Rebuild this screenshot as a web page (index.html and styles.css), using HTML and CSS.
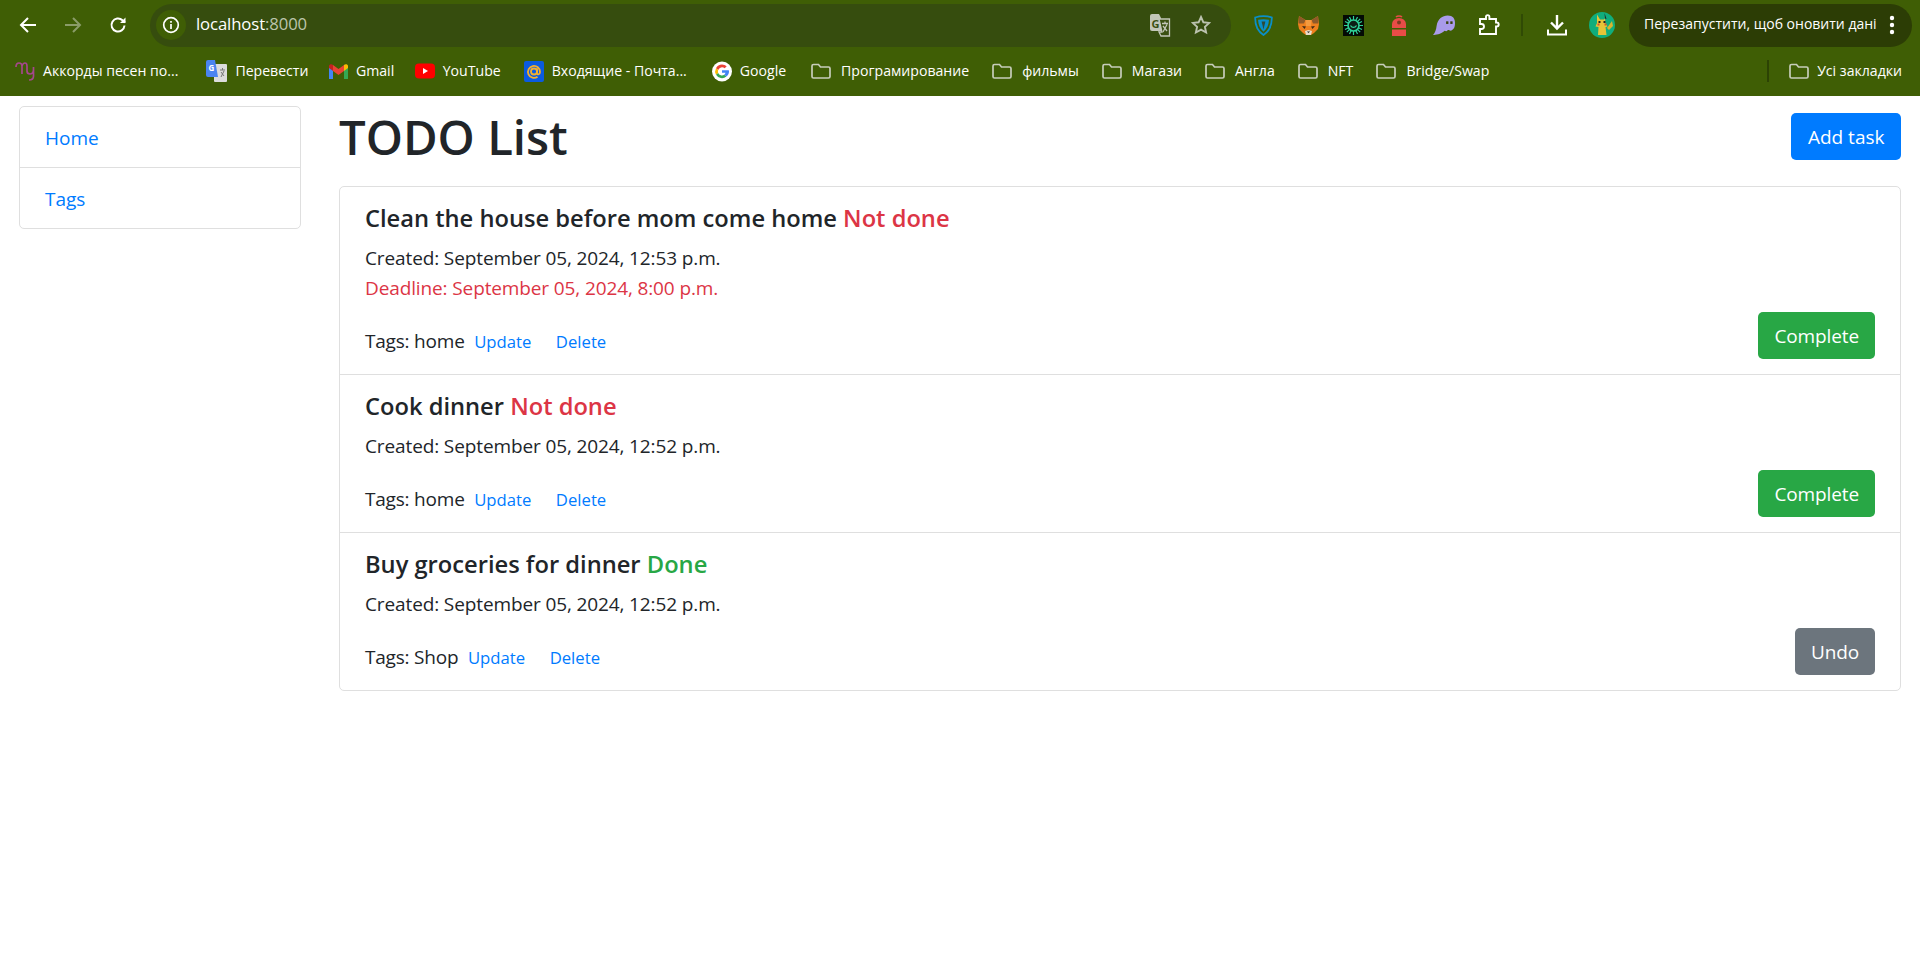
FILE: index.html
```html
<!DOCTYPE html>
<html lang="en">
<head>
<meta charset="utf-8">
<title>TODO List</title>
<link rel="stylesheet" href="styles.css">
</head>
<body>
<header class="chrome">
  <div class="toolbar">
    <span class="slot"><svg width="20" height="20" viewBox="0 0 20 20" fill="none" stroke="#fff" stroke-width="2"><path d="M18 10H3M10 3l-7 7 7 7"/></svg></span>
    <span class="slot"><svg width="20" height="20" viewBox="0 0 20 20" fill="none" stroke="#8a9c68" stroke-width="2"><path d="M2 10h15M10 3l7 7-7 7"/></svg></span>
    <span class="slot"><svg width="20" height="20" viewBox="0 0 20 20" fill="none" stroke="#fff" stroke-width="2"><path d="M16.5 10.5a6.5 6.5 0 1 1-2-5.2L17 7.5"/><path d="M17.5 2.5v5.500h-5.500" fill="#fff" stroke="none"/></svg></span>
    <div class="omnibox">
      <span class="site-info"><svg width="18" height="18" viewBox="0 0 18 18" fill="none" stroke="#fff" stroke-width="1.700"><circle cx="9" cy="9" r="7.300"/><path d="M9 8v5M9 5v1.800"/></svg></span>
      <span class="url">localhost<span class="url-port">:8000</span></span>
      <span class="omni-icons">
        <svg width="22" height="24" viewBox="0 0 22 24"><path d="M1 3a2 2 0 0 1 2-2h7l2 4v13H3a2 2 0 0 1-2-2z" fill="#c2c6b8"/><path d="M10 6h10.500v17H12l-2-4h3z" fill="#3a5011" stroke="#c2c6b8" stroke-width="1.300"/><text x="2.500" y="14.500" class="gt-letter">G</text><path d="M13 10.500h6M16 8.500v2M14 19l4-7.500M14 13l4 5" stroke="#c2c6b8" stroke-width="1.300" fill="none"/></svg>
        <svg width="20" height="20" viewBox="0 0 20 20" fill="none" stroke="#bcc2af" stroke-width="1.900"><path d="M10 2l2.400 5.300 5.800.6-4.300 3.900 1.200 5.700L10 14.600l-5.100 2.900 1.200-5.700L1.800 7.900l5.800-.6z"/></svg>
      </span>
    </div>
    <span class="slot slot-first"><svg width="19" height="21" viewBox="0 0 19 21"><path d="M1.200 2.500C6.500.8 12.500.8 17.800 2.500 18 10.500 15 16.500 9.500 20 4 16.500 1 10.500 1.200 2.500z" fill="none" stroke="#0a8fc9" stroke-width="1.800"/><path d="M4 4.800c3.500-.9 7.500-.9 11 0-.2 5-2 9-5.500 12C6 13.800 4.200 9.800 4 4.800z" fill="#0a8fc9"/><path d="M7.600 6.500h3.800L9.500 14.500z" fill="#2c4a3a"/></svg></span>
    <span class="slot"><svg width="21" height="21" viewBox="0 0 21 21"><path d="M0 9l1-8 6.500 4h6L20 1l1 8-1 5-4 4-3 2H8l-3-2-4-4z" fill="#ee801f"/><path d="M1 1l6.500 4L6 8.500H.6zM20 1l-6.500 4L15 8.500h5.400z" fill="#8f5a2a"/><path d="M7.500 5h6L13 11H8z" fill="#f49a3f"/><path d="M4 11l4 .5-1.500 2.500zM17 11l-4 .5 1.500 2.500z" fill="#3f2a18"/><path d="M7 16l3.500-1 3.500 1-1 4H8z" fill="#e7dccb"/><path d="M9 16.500h3L10.500 18z" fill="#222"/></svg></span>
    <span class="slot"><svg width="21" height="21" viewBox="0 0 21 21"><rect width="21" height="21" fill="#040a05"/><g stroke="#2fd39a" stroke-width="1.200"><path d="M10.500 1v19M1 10.500h19M3.800 3.800l13.400 13.400M17.200 3.800L3.800 17.200M6.500 2l8 17M14.500 2l-8 17M2 6.500l17 8M19 6.500l-17 8"/></g><circle cx="10.500" cy="10.500" r="5.500" fill="#0c1f16" stroke="#2fd39a" stroke-width="1.600"/><path d="M7.500 10.500c1.500 2.500 4.500 2.500 6 0" stroke="#2fd39a" fill="none" stroke-width="1.300"/></svg></span>
    <span class="slot"><svg width="14" height="21" viewBox="0 0 14 21"><path d="M4 2a3.500 2 0 0 1 6 0" fill="none" stroke="#e84c47" stroke-width="1.600"/><path d="M0 9a7 6 0 0 1 14 0v4H0z" fill="#e84c47"/><circle cx="7" cy="7.500" r="2" fill="#7d3a22"/><path d="M0 14.500h14V21H0z" fill="#e84c47"/></svg></span>
    <span class="slot"><svg width="22" height="20" viewBox="0 0 21 19"><path d="M0 19C2 17 3 14 3.500 10 4.500 4 9 .5 14 .5s7 3 7 7-1 6-4 7.500c-1.500 0-2-1-3-.5-1 1.500-2 1-3 .5-1.500 2-7 4-10 4z" fill="#a99bea"/><rect x="12.500" y="6" width="2.200" height="2.500" fill="#39430f"/><rect x="16.500" y="6" width="2.200" height="2.500" fill="#39430f"/></svg></span>
    <span class="slot"><svg width="22" height="22" viewBox="0 0 22 22" fill="none" stroke="#fff" stroke-width="1.900"><path d="M2 5h6V2.800a1.700 1.700 0 0 1 3.400 0V5H18v3.500h.7a2 2 0 0 1 0 4H18V20H2v-5h1.500a2.300 2.300 0 0 0 0-5H2z"/></svg></span>
    <span class="tool-sep"></span>
    <span class="slot"><svg width="22" height="24" viewBox="0 0 22 24" fill="none" stroke="#fff" stroke-width="2.400"><path d="M11 2v13M5 9.500l6 6 6-6"/><path d="M2 16.500v5h18v-5" stroke-width="2"/></svg></span>
    <span class="slot"><svg width="26" height="26" viewBox="0 0 26 26"><circle cx="13" cy="13" r="13" fill="#10ad7c"/><path d="M8 2.500l3 5h4l1-1 .5 5 2 3-2 .5 1 8H9l.5-8-3-.5 1.500-3.500z" fill="#e6c437"/><path d="M18 16l5-7 1 5-4 4z" fill="#d9b32f"/><path d="M15.500 1l2 6-1.500-.5z" fill="#222"/><rect x="9.500" y="9" width="2" height="2" fill="#222"/><rect x="14.500" y="9" width="2" height="2" fill="#222"/><rect x="8.500" y="11.500" width="2" height="2" fill="#d5502c"/><rect x="15.500" y="11.500" width="2" height="2" fill="#d5502c"/></svg></span>
    <div class="restart">
      <span class="restart-label">Перезапустити, щоб оновити дані</span>
      <svg width="6" height="20" viewBox="0 0 6 20" fill="#fff"><circle cx="3" cy="3" r="2.200"/><circle cx="3" cy="10" r="2.200"/><circle cx="3" cy="17" r="2.200"/></svg>
    </div>
  </div>
  <nav class="bookmarks">
    <a class="bm bm-first"><svg width="20" height="20" viewBox="0 0 20 20" fill="none" stroke="#a5478c" stroke-width="1.700"><path d="M1 6Q1 2 4 2 7 2 7 5V13M7 5Q8 2 10 2 12 2 12 5V10Q12 13 15 13 18 13 18.500 9V6M18.500 9V15Q18.500 19 14 19"/></svg><span>Аккорды песен по...</span></a>
    <a class="bm"><svg width="21" height="22" viewBox="0 0 21 22"><rect x="8" y="4" width="13" height="18" rx="1" fill="#dcdcdc"/><path d="M0 2a2 2 0 0 1 2-2h7l3 17H2a2 2 0 0 1-2-2z" fill="#4a84f0"/><text x="2.500" y="11" class="g-letter">G</text><path d="M14 10h5M16.500 8v2M15 17l3-6M15 12l3 4" stroke="#777" fill="none"/></svg><span>Перевести</span></a>
    <a class="bm bm-tight"><svg width="19" height="15" viewBox="0 0 19 15"><path d="M0 2v13h4V6z" fill="#4285f4"/><path d="M15 6v9h4V2z" fill="#34a853"/><path d="M4 7l5.500 4L15 7V1l-5.500 4L4 1z" fill="#ea4335"/><path d="M0 2c0-2 3-2.500 4-1v6L0 4z" fill="#c5221f"/><path d="M15 1c1-1.500 4-1 4 1v2l-4 3z" fill="#fbbc04"/></svg><span>Gmail</span></a>
    <a class="bm bm-tight"><svg width="20" height="16" viewBox="0 0 20 16"><rect width="20" height="15" y=".5" rx="4" fill="#f00"/><path d="M8 5l5 3-5 3z" fill="#fff"/></svg><span>YouTube</span></a>
    <a class="bm"><svg width="20" height="21" viewBox="0 0 20 21"><rect width="20" height="21" rx="2" fill="#0b5be0"/><circle cx="10" cy="10.500" r="3" fill="none" stroke="#f5b12e" stroke-width="1.800"/><path d="M13 7.500v4.500c0 2 3 2 3-1a6 6 0 1 0-2.500 4.800" fill="none" stroke="#f5b12e" stroke-width="1.800"/></svg><span>Входящие - Почта...</span></a>
    <a class="bm bm-wide"><svg width="20" height="21" viewBox="0 0 20 21"><circle cx="10" cy="10.500" r="10" fill="#fff"/><path d="M10 3.500a7 7 0 0 1 4.700 1.800l-2 2A4 4 0 0 0 6.200 9L4 7.200A7 7 0 0 1 10 3.500z" fill="#ea4335"/><path d="M4 7.200L6.200 9a4 4 0 0 0 0 3L4 13.800a7 7 0 0 1 0-6.600z" fill="#fbbc04"/><path d="M4 13.800L6.200 12a4 4 0 0 0 6 1.800l2.200 1.800A7 7 0 0 1 4 13.800z" fill="#34a853"/><path d="M17 10.500c0 2-.9 3.900-2.600 5.100l-2.200-1.800c.7-.5 1.100-1.200 1.300-2H10V9.200h6.800c.1.400.2.800.2 1.300z" fill="#4285f4"/></svg><span>Google</span></a>
    <a class="bm bm-wide"><svg class="folder" width="22" height="16" viewBox="0 0 20 16" preserveAspectRatio="xMinYMid meet"><path d="M1 3a1.500 1.500 0 0 1 1.500-1.500h5L9.500 4h8A1.500 1.500 0 0 1 19 5.500v8a1.500 1.500 0 0 1-1.500 1.500h-15A1.500 1.500 0 0 1 1 13.500z"/></svg><span>Програмирование</span></a>
    <a class="bm"><svg class="folder" width="22" height="16" viewBox="0 0 20 16" preserveAspectRatio="xMinYMid meet"><path d="M1 3a1.500 1.500 0 0 1 1.500-1.500h5L9.500 4h8A1.500 1.500 0 0 1 19 5.500v8a1.500 1.500 0 0 1-1.500 1.500h-15A1.500 1.500 0 0 1 1 13.500z"/></svg><span>фильмы</span></a>
    <a class="bm"><svg class="folder" width="22" height="16" viewBox="0 0 20 16" preserveAspectRatio="xMinYMid meet"><path d="M1 3a1.500 1.500 0 0 1 1.500-1.500h5L9.500 4h8A1.500 1.500 0 0 1 19 5.500v8a1.500 1.500 0 0 1-1.500 1.500h-15A1.500 1.500 0 0 1 1 13.500z"/></svg><span>Магази</span></a>
    <a class="bm"><svg class="folder" width="22" height="16" viewBox="0 0 20 16" preserveAspectRatio="xMinYMid meet"><path d="M1 3a1.500 1.500 0 0 1 1.500-1.500h5L9.500 4h8A1.500 1.500 0 0 1 19 5.500v8a1.500 1.500 0 0 1-1.500 1.500h-15A1.500 1.500 0 0 1 1 13.500z"/></svg><span>Англа</span></a>
    <a class="bm"><svg class="folder" width="22" height="16" viewBox="0 0 20 16" preserveAspectRatio="xMinYMid meet"><path d="M1 3a1.500 1.500 0 0 1 1.500-1.500h5L9.500 4h8A1.500 1.500 0 0 1 19 5.500v8a1.500 1.500 0 0 1-1.500 1.500h-15A1.500 1.500 0 0 1 1 13.500z"/></svg><span>NFT</span></a>
    <a class="bm"><svg class="folder" width="22" height="16" viewBox="0 0 20 16" preserveAspectRatio="xMinYMid meet"><path d="M1 3a1.500 1.500 0 0 1 1.500-1.500h5L9.500 4h8A1.500 1.500 0 0 1 19 5.500v8a1.500 1.500 0 0 1-1.500 1.500h-15A1.500 1.500 0 0 1 1 13.500z"/></svg><span>Bridge/Swap</span></a>
    <span class="bm-end">
      <span class="bm-sep"></span>
      <a class="bm"><svg class="folder" width="20" height="16" viewBox="0 0 20 16"><path d="M1 3a1.500 1.500 0 0 1 1.500-1.500h5L9.500 4h8A1.500 1.500 0 0 1 19 5.500v8a1.500 1.500 0 0 1-1.500 1.500h-15A1.500 1.500 0 0 1 1 13.500z"/></svg><span>Усі закладки</span></a>
    </span>
  </nav>
</header>
<div class="page">
  <aside class="side">
    <a class="side-link">Home</a>
    <a class="side-link">Tags</a>
  </aside>
  <main class="main">
    <div class="head">
      <h1 class="title">TODO List</h1>
      <a class="btn btn-blue">Add task</a>
    </div>
    <ul class="tasks">
      <li class="task">
        <h5 class="task-title">Clean the house before mom come home <span class="red">Not done</span></h5>
        <p class="line">Created: September 05, 2024, 12:53 p.m.</p>
        <p class="line red">Deadline: September 05, 2024, 8:00 p.m.</p>
        <div class="task-foot">
          <div class="foot-left"><span class="tags">Tags: home</span><a class="mini">Update</a><a class="mini">Delete</a></div>
          <a class="btn btn-green">Complete</a>
        </div>
      </li>
      <li class="task">
        <h5 class="task-title">Cook dinner <span class="red">Not done</span></h5>
        <p class="line">Created: September 05, 2024, 12:52 p.m.</p>
        <div class="task-foot">
          <div class="foot-left"><span class="tags">Tags: home</span><a class="mini">Update</a><a class="mini">Delete</a></div>
          <a class="btn btn-green">Complete</a>
        </div>
      </li>
      <li class="task">
        <h5 class="task-title">Buy groceries for dinner <span class="green">Done</span></h5>
        <p class="line">Created: September 05, 2024, 12:52 p.m.</p>
        <div class="task-foot">
          <div class="foot-left"><span class="tags">Tags: Shop</span><a class="mini">Update</a><a class="mini">Delete</a></div>
          <a class="btn btn-gray">Undo</a>
        </div>
      </li>
    </ul>
  </main>
</div>
</body>
</html>
```
FILE: styles.css
```css
* { box-sizing: border-box; }
html, body { margin: 0; padding: 0; }
body {
  background: #fff;
  color: #212529;
  font-family: "Open Sans", "Noto Sans", "Liberation Sans", sans-serif;
  font-size: 19px;
  line-height: 30px;
  min-height: 971px;
}

/* browser chrome */
.chrome { background: #3f5e05; height: 96px; color: #fff; overflow: hidden; }
.toolbar { display: flex; align-items: center; height: 50px; padding: 0 0 0 5px; }
.slot { width: 45px; height: 44px; flex: none; display: flex; align-items: center; justify-content: center; }
.slot-first { margin-left: 10px; }
.omnibox {
  width: 1081px; height: 43px; margin-left: 10px; flex: none;
  display: flex; align-items: center;
  background: #364d0e; border-radius: 22px;
  padding-left: 6px;
}
.site-info {
  width: 30px; height: 30px; border-radius: 50%; background: #3f5e05;
  display: flex; align-items: center; justify-content: center; flex: none;
}
.url { margin-left: 10px; padding-bottom: 2px; font-size: 16.700px; line-height: 20px; letter-spacing: -.1px; }
.url-port { color: #bcc5ac; }
.omni-icons { margin-left: auto; display: flex; align-items: center; gap: 20px; padding-right: 20px; }
.gt-letter { font-size: 11px; font-weight: 700; fill: #3a5011; }
.g-letter { font-size: 8px; font-weight: 700; fill: #fff; }
.tool-sep { width: 2px; height: 22px; background: #304a05; margin: 0 11px 0 10px; flex: none; }
.restart {
  width: 283px; height: 43px; margin-left: 5px; flex: none;
  background: #2c3d05; border-radius: 22px;
  display: flex; align-items: center; justify-content: space-between;
  padding: 0 17px 0 15px;
}
.restart-label { font-size: 14px; line-height: 20px; padding-bottom: 2px; white-space: nowrap; }

.bookmarks { display: flex; align-items: center; height: 46px; padding: 0 0 4px 15px; gap: 23px; }
.bm { display: flex; align-items: center; gap: 8px; font-size: 14.100px; line-height: 20px; white-space: nowrap; color: #fff; }
.bm-first { margin-right: 5px; }
.bm-tight { margin-left: -2.500px; }
.bm-wide { margin-left: 2px; }
.folder { fill: none; stroke: #c7cdbb; stroke-width: 1.700; }
.bm-end { margin-left: auto; display: flex; align-items: center; gap: 20px; padding-right: 18px; }
.bm-sep { width: 2px; height: 22px; background: #2c4304; }

/* page */
.page { display: flex; align-items: flex-start; padding: 10px 19px 0 19px; gap: 38px; }
.side { width: 282px; flex: none; border: 1px solid #dfdfdf; border-radius: 5px; display: flex; flex-direction: column; }
.side-link { color: #007bff; padding: 16px 25px 0; height: 60px; }
.side-link + .side-link { border-top: 1px solid #dfdfdf; height: 61px; padding-top: 16px; }
.main { flex: 1; min-width: 0; }
.head { display: flex; align-items: center; justify-content: space-between; margin-bottom: 20px; }
.title { margin: 0; height: 60px; padding-top: 1px; font-size: 47.300px; line-height: 60px; font-weight: 600; }
.btn { display: inline-block; color: #fff; border-radius: 5px; padding: 9px 16px 0; height: 47px; font-size: 19px; line-height: 30px; letter-spacing: -.12px; flex: none; }
.btn-blue { background: #007bff; letter-spacing: 0; padding: 9px 16.500px 0; }
.btn-green { background: #28a745; }
.btn-gray { background: #6c757d; }
.tasks { list-style: none; margin: 0; padding: 0; border: 1px solid #dfdfdf; border-radius: 5px; }
.task { padding: 15px 25px; }
.task + .task { border-top: 1px solid #dfdfdf; }
.task-title { margin: 0 0 10px; height: 30px; padding-top: 1px; font-size: 23.700px; line-height: 30px; font-weight: 600; white-space: nowrap; }
.line { margin: 0; height: 30px; padding-top: 1px; letter-spacing: -.12px; }
.red { color: #dc3545; }
.green { color: #28a745; }
.task-foot { display: flex; align-items: flex-end; justify-content: space-between; margin-top: 10px; }
.foot-left { display: flex; align-items: baseline; padding-bottom: 2px; }
.tags { letter-spacing: -.2px; }
.mini { color: #007bff; font-size: 16.700px; margin-left: 9.500px; margin-right: 15px; }
```
